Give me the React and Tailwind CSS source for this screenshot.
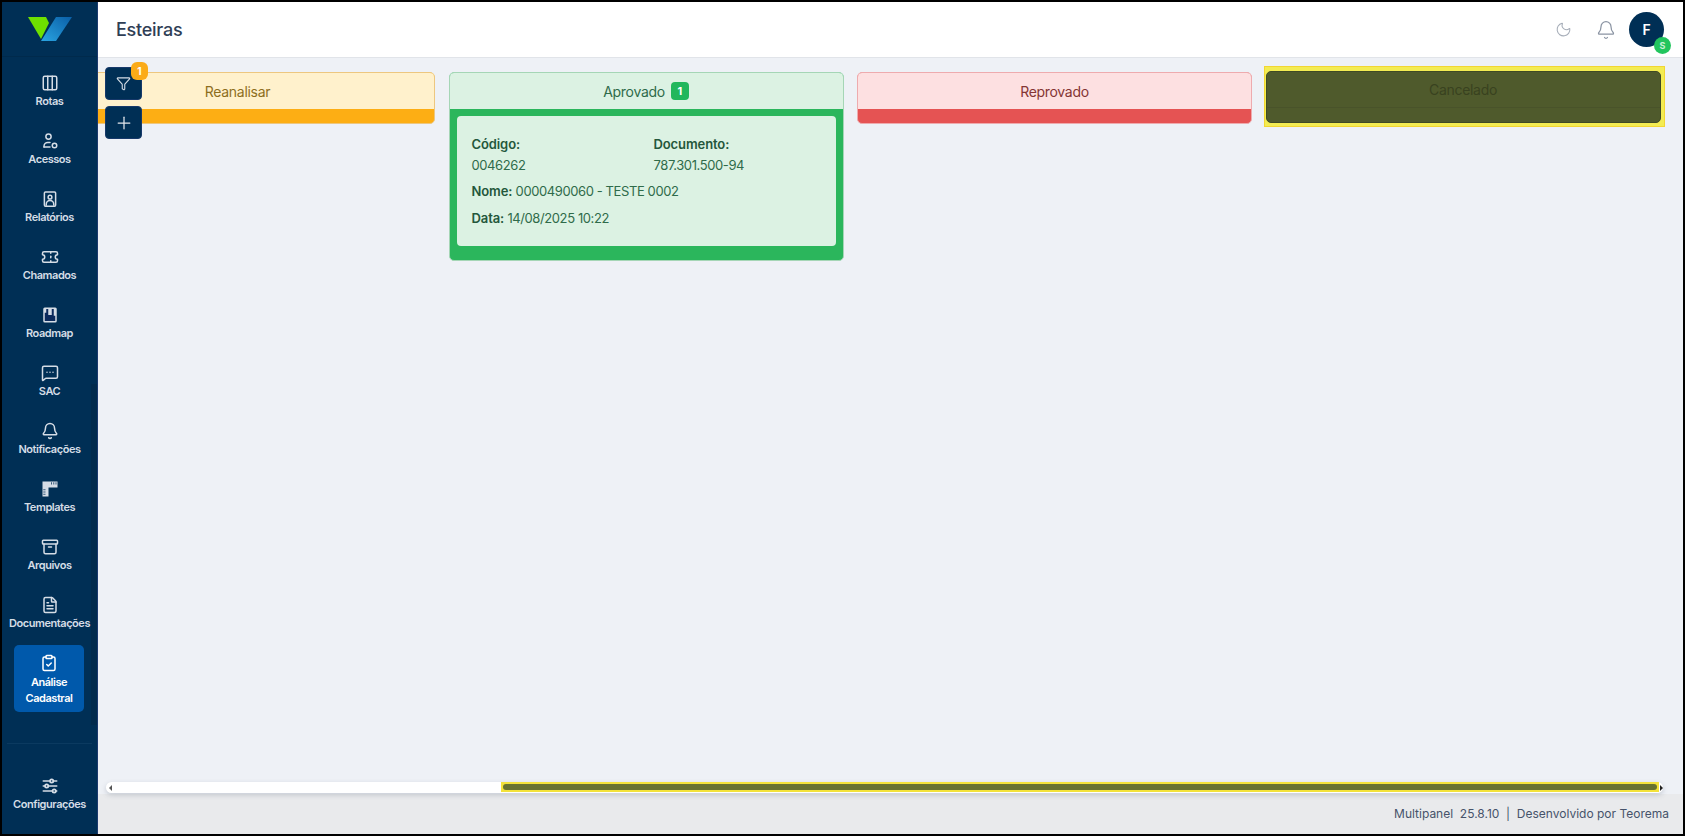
import {
  Archive,
  Bell,
  ClipboardCheck,
  Columns3,
  FileText,
  Filter,
  MessageSquareMore,
  Moon,
  Plus,
  Ticket,
} from "lucide-react";
import { TbAdjustmentsHorizontal } from "react-icons/tb";

function AccessIcon({ className }) {
  return (
    <svg viewBox="0 0 24 24" fill="none" stroke="currentColor" strokeWidth="2" strokeLinecap="round" className={className}>
      <circle cx="10" cy="6" r="3.5" />
      <path d="M4 20v-1a5 5 0 0 1 5-5h3" />
      <path d="M4 20h8" />
      <circle cx="18" cy="18" r="3" />
    </svg>
  );
}

function ReportIcon({ className }) {
  return (
    <svg viewBox="0 0 24 24" fill="none" stroke="currentColor" strokeWidth="2" strokeLinejoin="round" className={className}>
      <rect x="4.5" y="2.5" width="15" height="19" rx="1.5" />
      <circle cx="12" cy="9.5" r="2.5" />
      <path d="M7 21v-2a5 5 0 0 1 10 0v2" />
    </svg>
  );
}

function RoadmapIcon({ className }) {
  return (
    <svg viewBox="0 0 24 24" className={className}>
      <rect x="3" y="2" width="18" height="20" rx="2" fill="currentColor" />
      <path d="M5 20V9h2V4h3v8h4V4h3v9h2v7z" fill="#0b2a5c" />
      <path d="M10 4h4v8h-4z" fill="currentColor" />
    </svg>
  );
}

function TemplateIcon({ className }) {
  return (
    <svg viewBox="0 0 24 24" className={className}>
      <path d="M2 2h20v8H10v12H2z" fill="currentColor" />
      <path d="M14 3v3M17 3v3M20 3v3M3 13h3M3 16h3M3 19h3" stroke="#002f55" strokeWidth="1" />
    </svg>
  );
}

const menu = [
  { label: "Rotas", icon: Columns3 },
  { label: "Acessos", icon: AccessIcon },
  { label: "Relatórios", icon: ReportIcon },
  { label: "Chamados", icon: Ticket },
  { label: "Roadmap", icon: RoadmapIcon },
  { label: "SAC", icon: MessageSquareMore },
  { label: "Notificações", icon: Bell },
  { label: "Templates", icon: TemplateIcon },
  { label: "Arquivos", icon: Archive },
  { label: "Documentações", icon: FileText },
];

function Sidebar() {
  return (
    <aside className="w-[96px] shrink-0 bg-[#002f55] flex flex-col text-[#d5dde6] border-r border-[#1c3a6e]">
      <div className="h-[55px] shrink-0 flex items-center justify-center border-b border-[#002a4c]">
        <svg viewBox="0 0 44 24" className="w-[44px] h-[24px]">
          <defs>
            <linearGradient id="logoBlue" x1="0" y1="1" x2="1" y2="0">
              <stop offset="0" stopColor="#2aa5e2" />
              <stop offset="1" stopColor="#0a5ea6" />
            </linearGradient>
          </defs>
          <path d="M0 0h18l3 6-8 16z" fill="#6fe000" />
          <path d="M28 0h16L28 24H13z" fill="url(#logoBlue)" />
        </svg>
      </div>
      <nav className="relative flex-1 flex flex-col pt-[9px]">
        <div className="absolute right-0 top-[327px] h-[341px] w-[6px] bg-[#022b4d]" />
        {menu.map((item) => (
          <div key={item.label} className="relative h-[58px] flex flex-col items-center pt-[8px]">
            <item.icon className="w-[18px] h-[18px]" />
            <span className="mt-[1px] text-[11px] leading-[16px] font-semibold tracking-[-0.45px] whitespace-nowrap">{item.label}</span>
          </div>
        ))}
        <div className="relative ml-[12px] mr-[13px] mt-[-1px] h-[67px] rounded-[5px] bg-[#0059ab] flex flex-col items-center pt-[9px] text-white">
          <ClipboardCheck className="w-[18px] h-[18px]" />
          <span className="mt-[2px] text-[11px] leading-[16px] font-semibold tracking-[-0.45px] text-center">
            Análise
            <br />
            Cadastral
          </span>
        </div>
        <div className="mt-auto mx-[5px] border-t border-[#0b3a60] h-[91px] flex flex-col items-center pt-[32px]">
          <TbAdjustmentsHorizontal className="w-[20px] h-[20px]" />
          <span className="text-[11px] leading-[16px] font-semibold tracking-[-0.45px] whitespace-nowrap">Configurações</span>
        </div>
      </nav>
    </aside>
  );
}

function Header() {
  return (
    <header className="h-[56px] shrink-0 bg-white border-b border-[#e1e4e9] flex items-center pl-[18px] pr-[19px]">
      <h1 className="text-[18px] font-medium tracking-[-0.25px] text-[#2f3e55]">Esteiras</h1>
      <div className="ml-auto flex items-center">
        <Moon className="w-[17px] h-[17px] text-[#a6adb8] rotate-[-10deg]" strokeWidth={1.5} />
        <Bell className="ml-[24px] w-[20px] h-[20px] text-[#8b94a3]" strokeWidth={1.5} />
        <div className="relative ml-[13px] w-[35px] h-[35px] rounded-full bg-[#002f55] text-white text-[14px] font-semibold flex items-center justify-center">
          F
          <span className="absolute right-[-7px] bottom-[-7px] w-[17px] h-[17px] rounded-full bg-[#22c55e] text-[#c8f0d6] text-[9px] font-bold flex items-center justify-center">
            S
          </span>
        </div>
      </div>
    </header>
  );
}

function Column({ title, head, bar, border, text, count, children }) {
  return (
    <div className={`w-[395px] shrink-0 self-start rounded-[5px] border overflow-hidden ${border} ${bar}`}>
      <div className={`h-[36px] flex items-center justify-center gap-[6px] text-[14px] tracking-[-0.3px] ${head} ${text}`}>
        {title}
        {count && (
          <span className="w-[18px] h-[18px] rounded-[4px] bg-[#22b75c] text-white text-[11px] font-bold flex items-center justify-center">
            {count}
          </span>
        )}
      </div>
      <div className="min-h-[14px]">{children}</div>
    </div>
  );
}

function Card() {
  return (
    <div className="mx-[7px] mt-[7px] mb-[14px] h-[130px] rounded-[4px] bg-[#dcf2e3] px-[15px] pt-[18px] text-[13px] tracking-[-0.4px] text-[#2f6b4a]">
      <div className="grid grid-cols-[182px_1fr] leading-[20px]">
        <b className="font-semibold tracking-[-0.1px] text-[#24573b]">Código:</b>
        <b className="font-semibold tracking-[-0.1px] text-[#24573b]">Documento:</b>
        <span className="mt-[1px]">0046262</span>
        <span className="mt-[1px]">787.301.500-94</span>
      </div>
      <p className="mt-[6px] leading-[20px]">
        <b className="font-semibold tracking-[-0.1px] text-[#24573b]">Nome:</b> 0000490060 - TESTE 0002
      </p>
      <p className="mt-[7px] leading-[20px]">
        <b className="font-semibold tracking-[-0.1px] text-[#24573b]">Data:</b> 14/08/2025 10:22
      </p>
    </div>
  );
}

function Board() {
  return (
    <div className="relative flex-1 min-h-0 overflow-hidden">
      <div className="flex gap-[13.5px] pt-[14px] ml-[-58px]">
        <Column title="Reanalisar" head="bg-[#fff1cc]" bar="bg-[#fdae14]" border="border-[#edc77f]" text="text-[#8d6e1e]" />
        <Column title="Aprovado" count="1" head="bg-[#dcf2e3]" bar="bg-[#2bb65c]" border="border-[#a5d6b6]" text="text-[#2f6b4a]">
          <Card />
        </Column>
        <Column title="Reprovado" head="bg-[#fde0e1]" bar="bg-[#e55353]" border="border-[#eeabae]" text="text-[#843534]" />
        {/* highlighted column: the yellow box sits a little off the column */}
        <div className="self-start -mt-[6px] -ml-[2px] pt-[4px] pl-[1px] pr-[3px] pb-[3px] border border-[#f2d632] bg-[#f3ec52]">
          <Column
            title="Cancelado"
            head="bg-[#4f5a2c] border-b border-[#49532a]"
            bar="bg-[#4f5a2c]"
            border="border-[#3f4a25]"
            text="text-[#39421f]"
          />
        </div>
      </div>
      <div className="absolute left-[7px] top-[9px] flex flex-col gap-[6px]">
        <button className="relative w-[37px] h-[33px] rounded-[4px] bg-[#002f55] border border-[#16396a] flex items-center justify-center text-[#d5dde6]">
          <Filter className="w-[15px] h-[15px]" strokeWidth={1.75} />
          <span className="absolute right-[-7px] top-[-6px] w-[17px] h-[18px] rounded-[6px] bg-[#fbab18] text-white text-[10px] font-bold flex items-center justify-center">
            1
          </span>
        </button>
        <button className="w-[37px] h-[33px] rounded-[4px] bg-[#002f55] border border-[#16396a] flex items-center justify-center text-[#e3e7ec]">
          <Plus className="w-[20px] h-[20px]" strokeWidth={1.5} />
        </button>
      </div>
    </div>
  );
}

function Scrollbar() {
  return (
    <div className="h-[11px] shrink-0 ml-[8px] mr-[20px] mb-[1px] flex items-center rounded-full bg-white shadow-[0_2px_5px_rgba(80,90,110,0.25)] relative z-10">
      <span className="ml-[3px] w-0 h-0 border-y-[3px] border-y-transparent border-r-[3px] border-r-[#555]" />
      <div className="ml-auto w-[1158px] h-[10px] -mt-[1px] bg-[#f3e23a] flex items-center px-[2px]">
        <div className="w-full h-[6px] rounded-full bg-[#68722f]" />
      </div>
      <span className="ml-[1px] w-0 h-0 border-y-[3px] border-y-transparent border-l-[3px] border-l-[#222]" />
    </div>
  );
}

export default function App() {
  return (
    <div className="w-screen h-screen bg-black p-[2px] overflow-hidden font-['Inter','Liberation_Sans',sans-serif]">
      <div className="w-full h-full flex">
        <Sidebar />
        <main className="flex-1 min-w-0 flex flex-col bg-[#eef1f6]">
          <Header />
          <Board />
          <Scrollbar />
          <footer className="h-[40px] shrink-0 bg-[#e9eaec] flex items-center justify-end pr-[14px] text-[12px] text-[#46536a]">
            Multipanel&nbsp; 25.8.10 &nbsp;|&nbsp; Desenvolvido por Teorema
          </footer>
        </main>
      </div>
    </div>
  );
}
